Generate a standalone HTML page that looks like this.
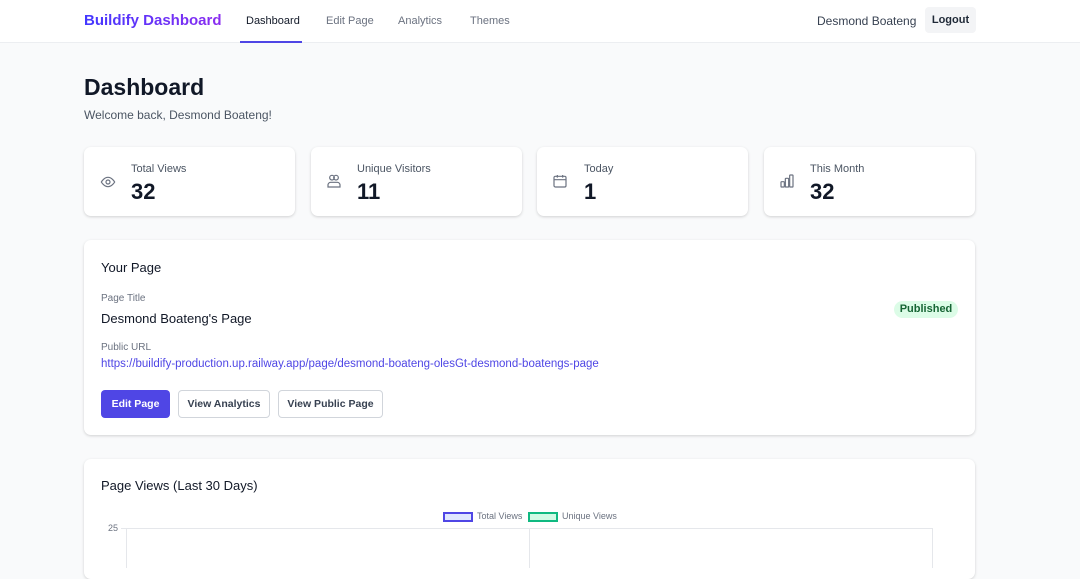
<!DOCTYPE html>
<html><head><style>
*{box-sizing:border-box;margin:0;padding:0}
body{width:1080px;height:558px;overflow:hidden;background:#f9fafb;font-family:"Liberation Sans",sans-serif;color:#111827;position:relative}
.nav{position:absolute;left:0;top:0;width:1080px;height:43px;background:#fff;border-bottom:1px solid #eceef1}
.abs{position:absolute;white-space:nowrap}
.card{position:absolute;background:#fff;border-radius:7px;box-shadow:0 1px 3px rgba(0,0,0,.12),0 1px 2px rgba(0,0,0,.05)}
.lbl{font-size:11px;color:#4b5563}
.num{font-size:22px;color:#111827;font-weight:bold}
.btn{position:absolute;height:28px;border-radius:4px;font-size:10.5px;font-weight:bold;display:flex;align-items:center;justify-content:center}
</style></head><body>
<div class="nav">
 <div class="abs" style="left:84px;top:12px;font-size:15px;font-weight:bold;background:linear-gradient(90deg,#4338ff,#8b2cf0);-webkit-background-clip:text;color:transparent">Buildify Dashboard</div>
 <div class="abs" style="left:246px;top:15px;font-size:11px;color:#111827">Dashboard</div>
 <div class="abs" style="left:240px;top:41px;width:62px;height:2px;background:#4f46e5"></div>
 <div class="abs" style="left:326px;top:15px;font-size:11px;color:#6b7280">Edit Page</div>
 <div class="abs" style="left:398px;top:15px;font-size:11px;color:#6b7280">Analytics</div>
 <div class="abs" style="left:470px;top:15px;font-size:11px;color:#6b7280">Themes</div>
 <div class="abs" style="left:817px;top:14px;font-size:12px;color:#374151">Desmond Boateng</div>
 <div class="abs" style="left:925px;top:7px;width:51px;height:26px;background:#f3f4f6;border-radius:4px;font-size:11px;font-weight:bold;color:#1f2937;text-align:center;line-height:26px">Logout</div>
</div>
<div class="abs" style="left:84px;top:74px;font-size:23px;font-weight:bold">Dashboard</div>
<div class="abs" style="left:84px;top:108px;font-size:12px;color:#4b5563">Welcome back, Desmond Boateng!</div>

<div class="card" style="left:84px;top:147px;width:211px;height:69px"></div>
<div class="card" style="left:311px;top:147px;width:211px;height:69px"></div>
<div class="card" style="left:537px;top:147px;width:211px;height:69px"></div>
<div class="card" style="left:764px;top:147px;width:211px;height:69px"></div>

<svg class="abs" style="left:100px;top:174px" width="16" height="16" viewBox="0 0 24 24" fill="none" stroke="#6b7280" stroke-width="1.8"><path d="M2 12s4-7 10-7 10 7 10 7-4 7-10 7S2 12 2 12z"/><circle cx="12" cy="12" r="3"/></svg>
<div class="abs lbl" style="left:131px;top:163px">Total Views</div><div class="abs num" style="left:131px;top:179px">32</div>
<svg class="abs" style="left:326px;top:173px" width="16" height="16" viewBox="0 0 24 24" fill="none" stroke="#6b7280" stroke-width="1.8"><circle cx="9" cy="7" r="3.5"/><circle cx="15" cy="7" r="3.5"/><path d="M3 21v-3a4 4 0 014-4h10a4 4 0 014 4v3z"/></svg>
<div class="abs lbl" style="left:357px;top:163px">Unique Visitors</div><div class="abs num" style="left:357px;top:179px">11</div>
<svg class="abs" style="left:552px;top:173px" width="16" height="16" viewBox="0 0 24 24" fill="none" stroke="#6b7280" stroke-width="1.8"><rect x="3" y="5" width="18" height="16" rx="2"/><path d="M3 10h18M8 3v4M16 3v4"/></svg>
<div class="abs lbl" style="left:584px;top:163px">Today</div><div class="abs num" style="left:584px;top:179px">1</div>
<svg class="abs" style="left:779px;top:173px" width="16" height="16" viewBox="0 0 24 24" fill="none" stroke="#6b7280" stroke-width="1.8"><rect x="3" y="13" width="5" height="8" rx="1"/><rect x="9.5" y="8" width="5" height="13" rx="1"/><rect x="16" y="3" width="5" height="18" rx="1"/></svg>
<div class="abs lbl" style="left:810px;top:163px">This Month</div><div class="abs num" style="left:810px;top:179px">32</div>

<div class="card" style="left:84px;top:240px;width:891px;height:195px"></div>
<div class="abs" style="left:101px;top:260px;font-size:13px">Your Page</div>
<div class="abs" style="left:101px;top:293px;font-size:10px;color:#6b7280">Page Title</div>
<div class="abs" style="left:101px;top:311px;font-size:13px">Desmond Boateng's Page</div>
<div class="abs" style="left:894px;top:301px;width:64px;height:17px;border-radius:9px;background:#dcfce7;color:#166534;font-size:11px;font-weight:bold;text-align:center;line-height:17px">Published</div>
<div class="abs" style="left:101px;top:342px;font-size:10px;color:#6b7280">Public URL</div>
<div class="abs" style="left:101px;top:358px;font-size:11.5px;color:#4f46e5">https://buildify-production.up.railway.app/page/desmond-boateng-olesGt-desmond-boatengs-page</div>
<div class="btn" style="left:101px;top:390px;width:69px;background:#4f46e5;color:#fff">Edit Page</div>
<div class="btn" style="left:178px;top:390px;width:92px;background:#fff;border:1px solid #d1d5db;color:#374151">View Analytics</div>
<div class="btn" style="left:278px;top:390px;width:105px;background:#fff;border:1px solid #d1d5db;color:#374151">View Public Page</div>

<div class="card" style="left:84px;top:459px;width:891px;height:120px"></div>
<div class="abs" style="left:101px;top:478px;font-size:13px">Page Views (Last 30 Days)</div>
<div class="abs" style="left:443px;top:512px;width:30px;height:10px;border:2px solid #4f46e5;background:#e0e7ff"></div>
<div class="abs" style="left:477px;top:511px;font-size:9px;color:#6b7280">Total Views</div>
<div class="abs" style="left:528px;top:512px;width:30px;height:10px;border:2px solid #10b981;background:#d1fae5"></div>
<div class="abs" style="left:562px;top:511px;font-size:9px;color:#6b7280">Unique Views</div>
<div class="abs" style="left:108px;top:523px;font-size:9px;color:#6b7280">25</div>
<div class="abs" style="left:121px;top:528px;width:812px;height:1px;background:#e5e7eb"></div>
<div class="abs" style="left:126px;top:528px;width:1px;height:40px;background:#e5e7eb"></div>
<div class="abs" style="left:529px;top:528px;width:1px;height:40px;background:#e5e7eb"></div>
<div class="abs" style="left:932px;top:528px;width:1px;height:40px;background:#e5e7eb"></div>
</body></html>
